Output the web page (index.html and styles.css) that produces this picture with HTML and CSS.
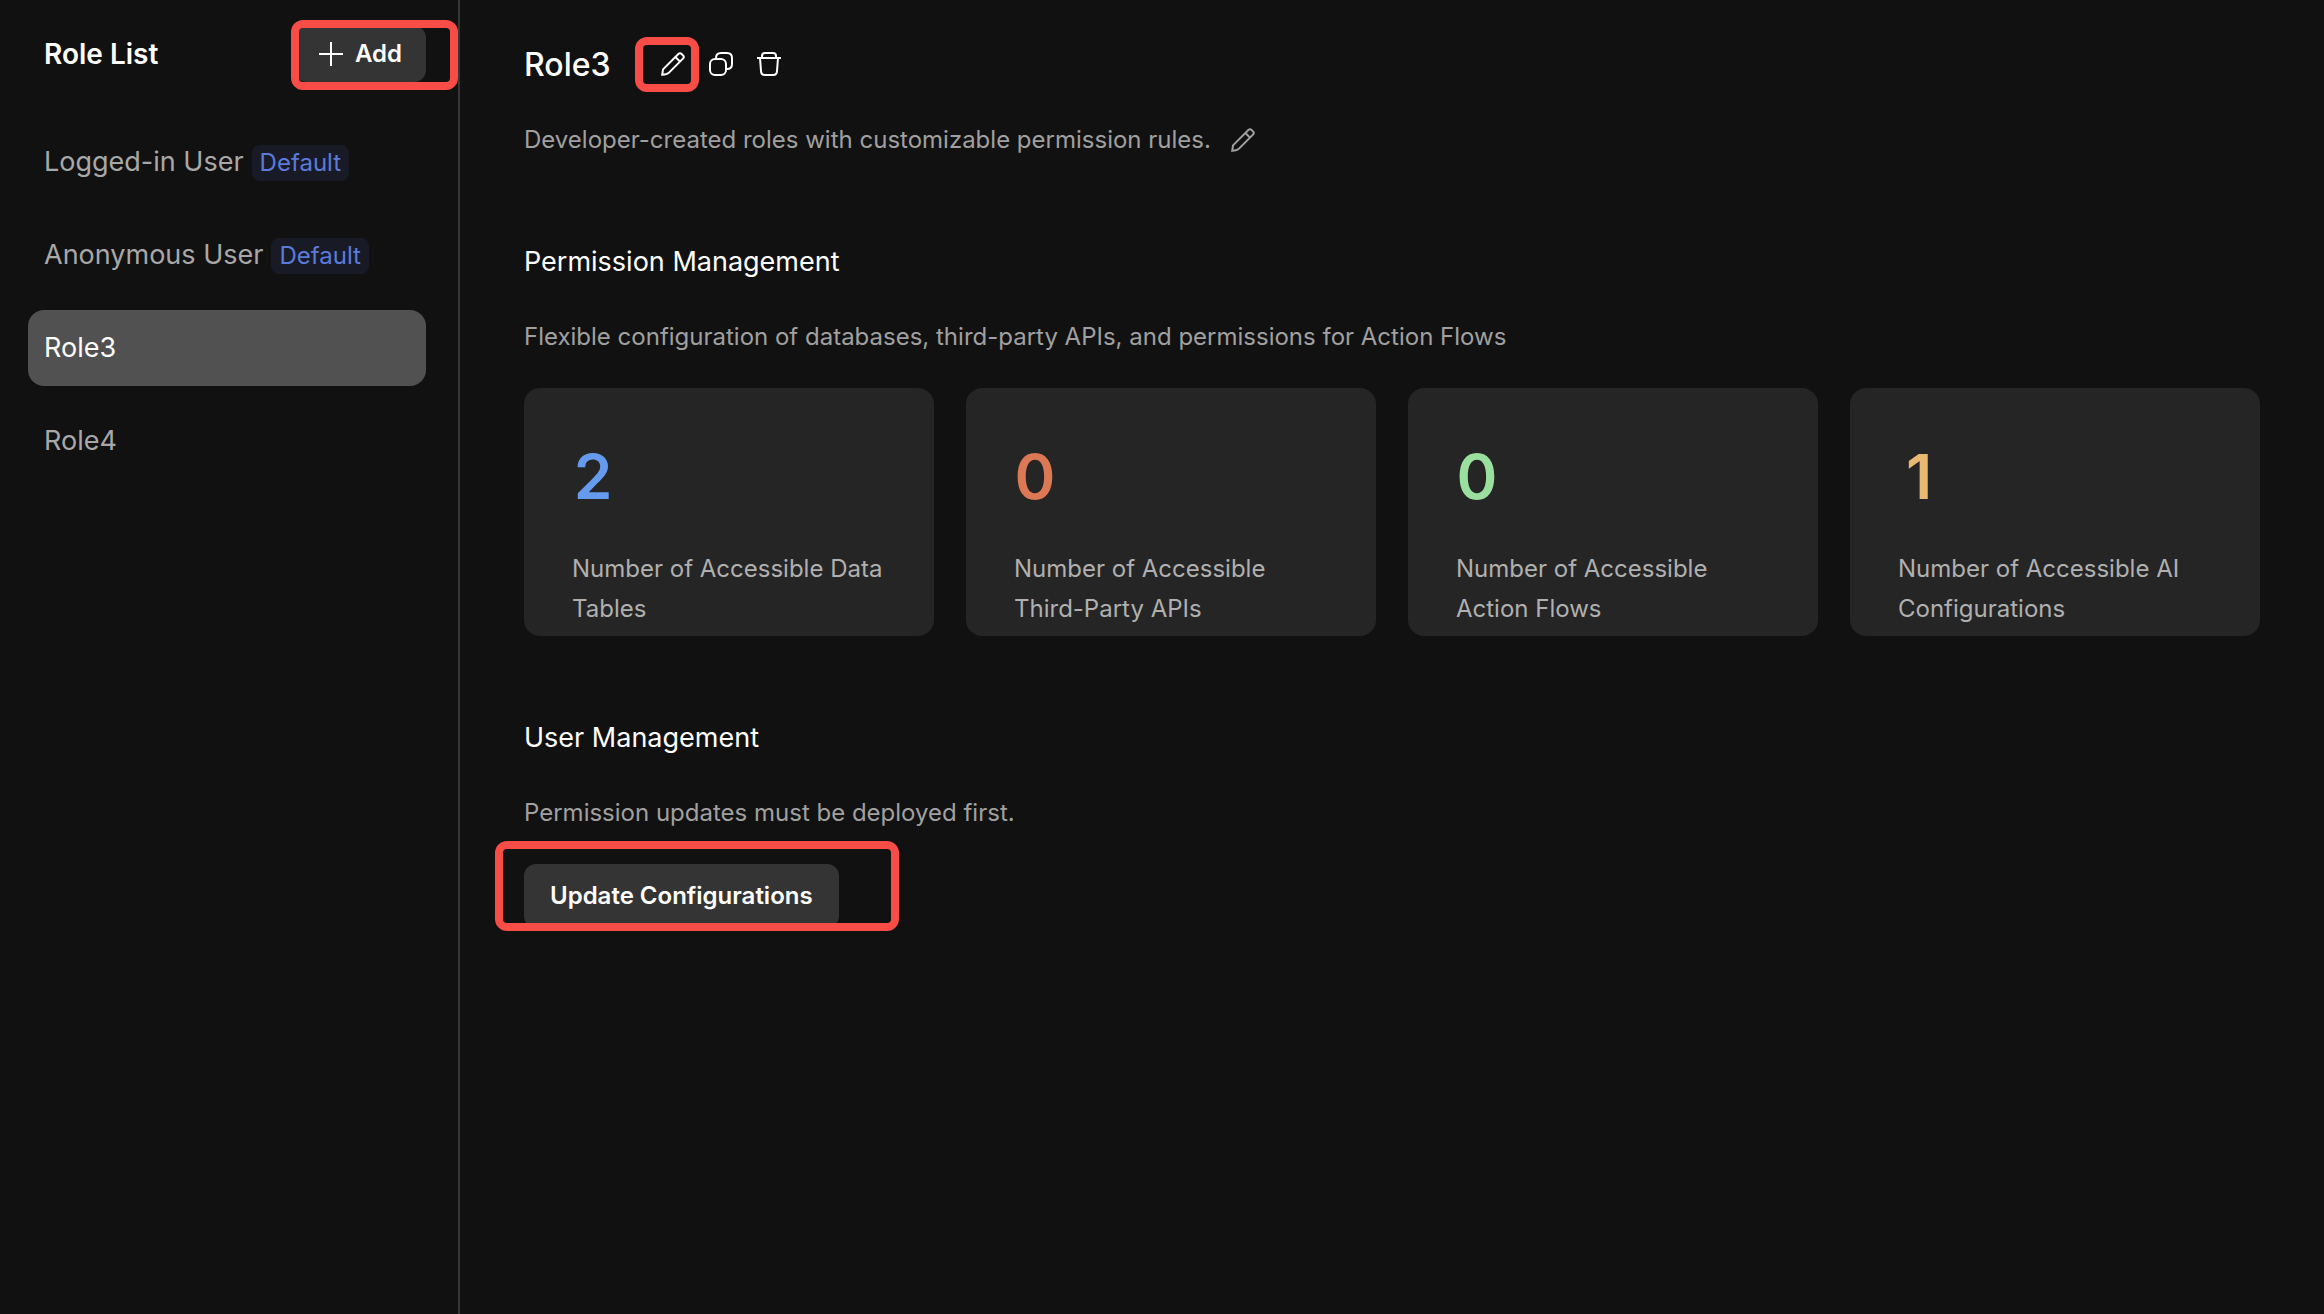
FILE: index.html
```html
<!DOCTYPE html>
<html lang="en">
<head>
<meta charset="utf-8">
<title>Role List</title>
<link rel="stylesheet" href="styles.css">
</head>
<body>
<svg class="sprite" aria-hidden="true">
  <symbol id="pencil" viewBox="0 0 24 24">
    <path d="M1.2 22.8 L2 17.4 L17.6 1.8 Q19 .6 20.4 1.8 L22.2 3.6 Q23.4 5 22.2 6.4 L8 20.6 Q6 22.6 1.2 22.8 Z M14.6 5.2 L18.8 9.4"/>
  </symbol>
  <symbol id="copy" viewBox="0 0 24 24">
    <rect x="1" y="7" width="16" height="16" rx="5"/>
    <path d="M7 7 V6 Q7 1 12 1 H18 Q23 1 23 6 V12 Q23 17 18 17 H17"/>
  </symbol>
  <symbol id="trash" viewBox="0 0 24 24">
    <path d="M0 6 H24 M5 6 V4 Q5 1 8 1 H16 Q19 1 19 4 V6 M3 6 L4 19 Q4 23 8 23 H16 Q20 23 20 19 L21 6"/>
  </symbol>
  <symbol id="plus" viewBox="0 0 24 24">
    <path d="M12 0 V24 M0 12 H24"/>
  </symbol>
</svg>
<div class="app">
  <aside class="sidebar">
    <header class="sidebar-head">
      <h1 class="sidebar-title">Role List</h1>
      <div class="marked">
        <button class="btn btn-add" type="button"><svg class="icon"><use href="#plus"/></svg>Add</button>
        <span class="mark mark-add"></span>
      </div>
    </header>
    <nav class="roles">
      <a class="role" href="#logged-in">Logged-in User <span class="badge">Default</span></a>
      <a class="role" href="#anonymous">Anonymous User <span class="badge">Default</span></a>
      <a class="role role-active" href="#role3" aria-current="page">Role3</a>
      <a class="role" href="#role4">Role4</a>
    </nav>
  </aside>
  <main class="main">
    <header class="role-head">
      <h2 class="role-title">Role3</h2>
      <div class="tools">
        <div class="marked">
          <button class="icon-btn" type="button" aria-label="Rename role"><svg class="icon"><use href="#pencil"/></svg></button>
          <span class="mark mark-edit"></span>
        </div>
        <button class="icon-btn" type="button" aria-label="Duplicate role"><svg class="icon"><use href="#copy"/></svg></button>
        <button class="icon-btn" type="button" aria-label="Delete role"><svg class="icon"><use href="#trash"/></svg></button>
      </div>
    </header>
    <div class="about">
      <p class="text">Developer-created roles with customizable permission rules.</p>
      <button class="icon-btn icon-muted" type="button" aria-label="Edit description"><svg class="icon"><use href="#pencil"/></svg></button>
    </div>
    <section class="section">
      <h3 class="section-title">Permission Management</h3>
      <p class="text">Flexible configuration of databases, third-party APIs, and permissions for Action Flows</p>
      <div class="cards">
        <article class="card"><strong class="count blue">2</strong><p class="label">Number of Accessible Data Tables</p></article>
        <article class="card"><strong class="count orange">0</strong><p class="label">Number of Accessible Third-Party APIs</p></article>
        <article class="card"><strong class="count green">0</strong><p class="label">Number of Accessible Action Flows</p></article>
        <article class="card"><strong class="count yellow">1</strong><p class="label">Number of Accessible AI Configurations</p></article>
      </div>
    </section>
    <section class="section">
      <h3 class="section-title">User Management</h3>
      <p class="text">Permission updates must be deployed first.</p>
      <div class="marked update">
        <button class="btn btn-update" type="button">Update Configurations</button>
        <span class="mark mark-update"></span>
      </div>
    </section>
  </main>
</div>
</body>
</html>
```
FILE: styles.css
```css
* { box-sizing: border-box; }

body {
  margin: 0;
  background: #111;
  color: #fff;
  font-family: Inter, "Liberation Sans", sans-serif;
  font-size: 24px;
  line-height: 40px;
}

h1, h2, h3, p { margin: 0; }
button { font: inherit; color: inherit; border: 0; cursor: pointer; }
.sprite { display: none; }

.icon {
  display: block;
  width: 24px;
  height: 24px;
  overflow: visible;
  fill: none;
  stroke: currentColor;
  stroke-width: 2;
}

.app { display: flex; min-height: 100vh; }

/* Sidebar */
.sidebar {
  flex: none;
  width: 460px;
  padding: 26px 32px 26px 28px;
  border-right: 2px solid #363636;
}
.sidebar-head {
  display: flex;
  align-items: center;
  justify-content: space-between;
  padding-left: 16px;
}
.sidebar-title { font-size: 28px; font-weight: 600; }

.btn {
  display: flex;
  align-items: center;
  gap: 12px;
  padding: 0 24px;
  border-radius: 12px;
  background: #343434;
  font-weight: 600;
}
.btn-add { height: 56px; }
.btn-update { height: 64px; padding: 0 26px; }

.roles {
  display: flex;
  flex-direction: column;
  gap: 17px;
  margin-top: 42px;
}
.role {
  display: flex;
  align-items: center;
  gap: 8px;
  height: 76px;
  padding: 0 16px;
  border-radius: 16px;
  color: #a8a8a8;
  font-size: 27px;
  text-decoration: none;
}
.role-active { background: #515151; color: #fff; }
.badge {
  margin-top: 2px;
  padding: 0 8px;
  border-radius: 8px;
  background: #181b26;
  color: #5b7bdc;
  font-size: 24px;
  line-height: 36px;
}

/* Role details */
.main { flex: 1; min-width: 0; padding: 40px 64px; }
.role-head { display: flex; align-items: center; gap: 50px; height: 48px; }
.role-title { padding-top: 2px; font-size: 32px; font-weight: 500; }
.tools { display: flex; gap: 24px; }
.icon-btn { display: block; padding: 0; background: none; }
.icon-muted { color: #a0a0a0; }
.about { display: flex; align-items: center; gap: 20px; margin-top: 32px; }
.text { color: #a0a0a0; }

.section { margin-top: 82px; }
.section-title {
  margin-bottom: 35px;
  font-size: 27px;
  font-weight: 400;
}
.cards {
  display: grid;
  grid-template-columns: repeat(4, 1fr);
  gap: 32px;
  margin-top: 31px;
}
.card {
  padding: 49px 48px 7px;
  border-radius: 16px;
  background: #252525;
}
.count {
  display: block;
  width: 42px;
  font-size: 62px;
  font-weight: 600;
  line-height: 80px;
  text-align: center;
}
.label { margin-top: 32px; color: #b0b0b0; }
.blue { color: #659bef; }
.orange { color: #dc7853; }
.green { color: #9bdf9f; }
.yellow { color: #e8b970; }
.update { margin-top: 31px; width: max-content; }

/* Highlight frames over the controls */
.marked { position: relative; }
.mark {
  position: absolute;
  border: 8px solid #f84c47;
  border-radius: 12px;
  pointer-events: none;
}
.mark-add { inset: -6px -32px -8px -4px; }
.mark-edit { inset: -15px -14px -16px -26px; }
.mark-update { inset: -23px -60px -3px -29px; }
```
